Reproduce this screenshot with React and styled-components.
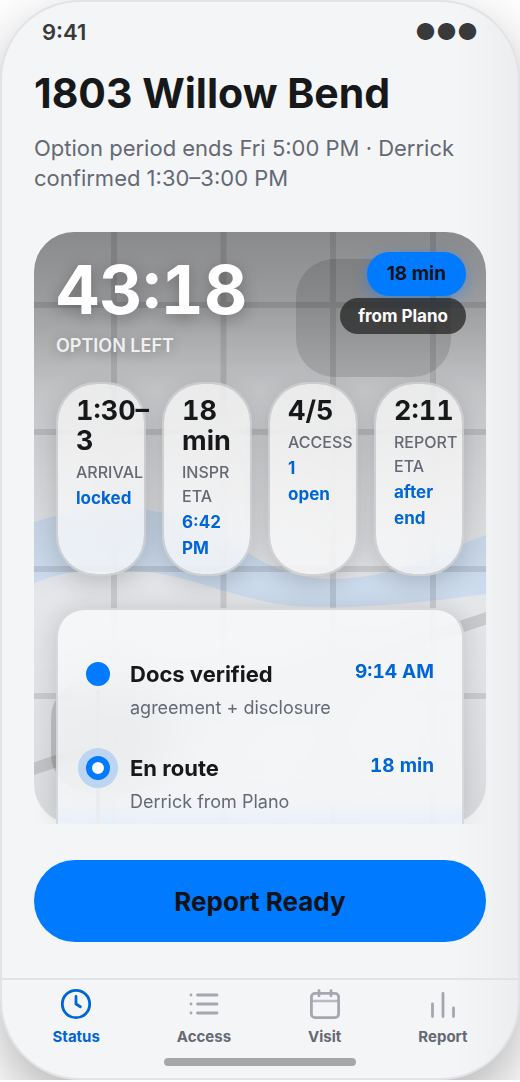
import React, { useState } from 'react'
import styled, { createGlobalStyle } from 'styled-components'

const GlobalStyle = createGlobalStyle`
  * {
    box-sizing: border-box;
  }
  body {
    margin: 0;
    background: #fff;
    overflow: hidden;
    font-family: Inter, sans-serif;
    color: #17181a;
  }
  button {
    font-family: inherit;
    border: 0;
    padding: 0;
    background: none;
    cursor: pointer;
  }
  h1, p, ul {
    margin: 0;
    padding: 0;
  }
`

const Phone = styled.main`
  display: flex;
  flex-direction: column;
  height: calc(100vh - 2px);
  border: 2px solid #e2e3e6;
  border-radius: 80px;
  overflow: hidden;
  background: linear-gradient(to right, transparent 88%, rgba(0, 0, 0, 0.03)), #f4f5f7;
  box-shadow: 0 24px 60px rgba(0, 0, 0, 0.3);
`
const StatusBar = styled.div`
  display: flex;
  align-items: center;
  justify-content: space-between;
  padding: 16px 40px 0;
  font-size: 22px;
  font-weight: 600;
  line-height: 28px;
  color: #38393b;
`
const StatusDots = styled.span`
  font-size: 23px;
`
const Header = styled.header`
  padding: 22px 32px 38px;
`
const Title = styled.h1`
  font-size: 41px;
  font-weight: 700;
  line-height: 50px;
`
const Subtitle = styled.p`
  margin: 15px 0 1px;
  font-size: 22px;
  line-height: 30px;
  color: #656974;
`
const Hero = styled.section`
  position: relative;
  display: flex;
  flex-direction: column;
  flex: 1;
  min-height: 0;
  margin: 0 32px;
  padding: 20px 22px 0;
`
const MapLayer = styled.div`
  position: absolute;
  inset: 0;
  border-radius: 40px;
  overflow: hidden;
  svg {
    display: block;
    width: 100%;
    height: 100%;
  }
`
const HeroTop = styled.div`
  position: relative;
  display: flex;
  justify-content: space-between;
  height: 130px;
  margin-right: -2px;
`
const Timer = styled.p`
  font-size: 67px;
  font-weight: 700;
  font-variant-numeric: tabular-nums;
  line-height: 76px;
  color: #fff;
  text-shadow: 0 4px 16px rgba(0, 0, 0, 0.3);
`
const TimerLabel = styled.p`
  margin-top: 6px;
  font-size: 18px;
  font-weight: 600;
  line-height: 24px;
  color: rgba(255, 255, 255, 0.86);
  text-shadow: 0 2px 12px rgba(0, 0, 0, 0.3);
`
const Badges = styled.div`
  display: flex;
  flex-direction: column;
  align-items: flex-end;
  gap: 2px;
`
const EtaBadge = styled.span`
  padding: 0 20px;
  border-radius: 22px;
  font-size: 19px;
  font-weight: 700;
  line-height: 44px;
  color: #111318;
  background: #007aff;
  box-shadow: 0 4px 16px rgba(0, 122, 255, 0.4);
`
const OriginBadge = styled.span`
  padding: 0 18px;
  border-radius: 18px;
  font-size: 17px;
  font-weight: 700;
  line-height: 36px;
  color: #fff;
  background: rgba(38, 38, 38, 0.76);
`
const Chips = styled.ul`
  position: relative;
  display: grid;
  grid-template-columns: repeat(4, minmax(0, 1fr));
  gap: 16px;
  list-style: none;
`
const Chip = styled.li`
  padding: 12px 18px 13px;
  border: 2px solid rgba(205, 206, 209, 0.8);
  border-radius: 40px;
  background: rgba(255, 255, 255, 0.66);
  background-clip: padding-box;
  backdrop-filter: blur(20px);
  box-shadow: 0 8px 24px rgba(0, 0, 0, 0.16);
`
const ChipValue = styled.p`
  font-size: 27px;
  font-weight: 700;
  font-variant-numeric: tabular-nums;
  line-height: 30px;
`
const ChipLabel = styled.p`
  margin: 4px 0 1px;
  font-size: 16px;
  font-weight: 500;
  line-height: 24px;
  color: #656974;
`
const ChipNote = styled.p`
  font-size: 17px;
  font-weight: 700;
  line-height: 26px;
  color: #0066d6;
`
const Sheet = styled.div`
  position: relative;
  flex: 1 1 0;
  min-height: 0;
  margin-top: 32px;
  padding: 50px 28px 0;
  border: 2px solid rgba(214, 215, 218, 0.9);
  border-bottom: 0;
  border-radius: 28px 28px 0 0;
  overflow: hidden;
  background: linear-gradient(to top, rgba(222, 236, 255, 0.5), transparent 24px), rgba(250, 251, 252, 0.78);
  background-clip: padding-box;
  backdrop-filter: blur(24px);
  box-shadow: 0 0 24px rgba(0, 0, 0, 0.14);
  clip-path: inset(-30px -30px 0 -30px);
`
const Step = styled.div`
  display: flex;
  gap: 20px;
`
const Rail = styled.div`
  display: flex;
  flex-direction: column;
  align-items: center;
`
const Marker = styled.span`
  position: relative;
  z-index: 1;
  width: 24px;
  height: 24px;
  margin-top: 2px;
  border-radius: 50%;
  border: 6px solid #007aff;
  background: ${(props) => (props.$active ? '#fff' : '#007aff')};
  box-shadow: ${(props) => (props.$active ? '0 0 0 8px #bdd5f1' : 'none')};
`
const Connector = styled.span`
  flex: 1;
  width: 4px;
  margin: 4px 0 6px;
  background: #ebecf0;
`
const StepBody = styled.div`
  flex: 1;
  padding-bottom: 33px;
`
const StepTitle = styled.p`
  font-size: 22px;
  font-weight: 700;
  line-height: 28px;
`
const StepNote = styled.p`
  margin-top: 7px;
  font-size: 18px;
  line-height: 26px;
  color: #656974;
`
const StepTime = styled.time`
  font-size: 19px;
  font-weight: 700;
  font-variant-numeric: tabular-nums;
  line-height: 24px;
  color: #0066d6;
`
const PrimaryButton = styled.button`
  flex: none;
  height: 82px;
  margin: 36px 32px;
  border-radius: 41px;
  font-size: 26px;
  font-weight: 700;
  color: #111318;
  background: #007aff;
`
const TabBar = styled.nav`
  display: flex;
  justify-content: space-around;
  padding: 8px 12px 0;
  border-top: 2px solid #e2e3e6;
`
const Tab = styled.button`
  display: flex;
  flex-direction: column;
  align-items: center;
  gap: 7px;
  font-size: 15px;
  font-weight: 700;
  line-height: 20px;
  color: ${(props) => (props.$active ? '#0066d6' : '#656974')};
  svg {
    display: block;
    width: 32px;
    height: 32px;
    color: ${(props) => (props.$active ? '#0066d6' : '#a5a6af')};
  }
`
const HomeIndicator = styled.div`
  flex: none;
  width: 192px;
  height: 8px;
  margin: 11px auto 12px;
  border-radius: 4px;
  background: #a6a7a9;
`

const chips = [
  { value: '1:30–3', label: 'ARRIVAL', note: 'locked' },
  { value: '18 min', label: 'INSPR ETA', note: '6:42 PM' },
  { value: '4/5', label: 'ACCESS', note: '1 open' },
  { value: '2:11', label: 'REPORT ETA', note: 'after end' },
]

const steps = [
  { title: 'Docs verified', note: 'agreement + disclosure', time: '9:14 AM' },
  { title: 'En route', note: 'Derrick from Plano', time: '18 min', active: true },
]

const tabs = [
  {
    name: 'Status',
    icon: (
      <>
        <circle cx='16' cy='16' r='13.7' strokeWidth='2.8' />
        <path d='M16 8.500V16l4.400 2.800' strokeWidth='2.8' />
      </>
    ),
  },
  {
    name: 'Access',
    icon: <path d='M9.500 7h19.500M9.500 16h19.500M9.500 25h19.500M3 7h.01M3 16h.01M3 25h.01' strokeWidth='2.8' />,
  },
  {
    name: 'Visit',
    icon: (
      <>
        <rect x='2.4' y='5.4' width='27.2' height='24.2' rx='3.6' strokeWidth='2.8' />
        <path d='M10 2.600v5.200M22 2.600v5.200' strokeWidth='2.8' />
        <path d='M2.400 13h27.200' strokeWidth='2.4' opacity='.75' />
      </>
    ),
  },
  {
    name: 'Report',
    icon: <path d='M5.500 16v12.500M16 5.500v23M26.500 20v8.500' strokeWidth='2.8' />,
  },
]

const MapArt = () => (
  <svg viewBox='0 0 452 592' preserveAspectRatio='none' aria-hidden='true'>
    <defs>
      <linearGradient id='shade' x1='0' y1='0' x2='0' y2='1'>
        <stop offset='0' stopColor='#000' stopOpacity='.4' />
        <stop offset='.12' stopColor='#000' stopOpacity='.32' />
        <stop offset='.27' stopColor='#000' stopOpacity='.15' />
        <stop offset='.42' stopColor='#000' stopOpacity='.08' />
        <stop offset='.62' stopColor='#000' stopOpacity='0' />
        <stop offset='1' stopColor='#000' stopOpacity='.05' />
      </linearGradient>
    </defs>
    <rect width='452' height='592' fill='#e5e6e9' />
    <path
      d='M0 290C60 271 120 272 165 292C215 318 240 347 301 347C360 346 400 322 452 303V362C380 372 320 377 260 374C200 368 150 340 100 339C60 337 30 338 0 351Z'
      fill='#cddcee'
    />
    <path d='M80 0V592M189.500 0V592M299 0V592M399 0V592M0 73H452M0 200H452M0 337H452M0 464H452' stroke='#000' strokeOpacity='.1' strokeWidth='6' fill='none' />
    <path d='M-10 540L462 383' stroke='#000' strokeOpacity='.12' strokeWidth='12' />
    <rect x='262' y='27' width='155' height='118' rx='38' fill='#000' fillOpacity='.12' />
    <rect x='17' y='448' width='120' height='112' rx='38' fill='#000' fillOpacity='.14' />
    <rect width='452' height='592' fill='url(#shade)' />
  </svg>
)

const App = () => {
  const [tab, setTab] = useState('Status')

  return (
    <>
      <GlobalStyle />
      <Phone>
        <StatusBar>
          <span>9:41</span>
          <StatusDots>●●●</StatusDots>
        </StatusBar>
        <Header>
          <Title>1803 Willow Bend</Title>
          <Subtitle>Option period ends Fri 5:00 PM · Derrick confirmed 1:30–3:00 PM</Subtitle>
        </Header>
        <Hero>
          <MapLayer>
            <MapArt />
          </MapLayer>
          <HeroTop>
            <div>
              <Timer>43:18</Timer>
              <TimerLabel>OPTION LEFT</TimerLabel>
            </div>
            <Badges>
              <EtaBadge>18 min</EtaBadge>
              <OriginBadge>from Plano</OriginBadge>
            </Badges>
          </HeroTop>
          <Chips>
            {chips.map((chip) => (
              <Chip key={chip.label}>
                <ChipValue>{chip.value}</ChipValue>
                <ChipLabel>{chip.label}</ChipLabel>
                <ChipNote>{chip.note}</ChipNote>
              </Chip>
            ))}
          </Chips>
          <Sheet>
            {steps.map((step) => (
              <Step key={step.title}>
                <Rail>
                  <Marker $active={step.active} />
                  <Connector />
                </Rail>
                <StepBody>
                  <StepTitle>{step.title}</StepTitle>
                  <StepNote>{step.note}</StepNote>
                </StepBody>
                <StepTime>{step.time}</StepTime>
              </Step>
            ))}
          </Sheet>
        </Hero>
        <PrimaryButton>Report Ready</PrimaryButton>
        <TabBar>
          {tabs.map(({ name, icon }) => (
            <Tab key={name} $active={tab === name} onClick={() => setTab(name)}>
              <svg viewBox='0 0 32 32' fill='none' stroke='currentColor' strokeLinecap='round' strokeLinejoin='round'>
                {icon}
              </svg>
              {name}
            </Tab>
          ))}
        </TabBar>
        <HomeIndicator />
      </Phone>
    </>
  )
}

export default App
